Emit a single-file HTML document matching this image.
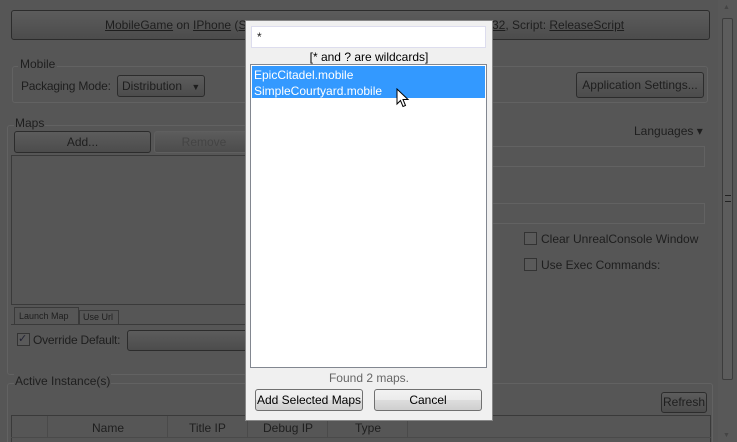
<!DOCTYPE html>
<html><head><style>
*{box-sizing:border-box;margin:0;padding:0}
html,body{width:737px;height:442px;overflow:hidden}
body{background:#565656;font-family:"Liberation Sans",sans-serif;font-size:12px;color:#1e1e1e;position:relative}
.a{position:absolute;white-space:nowrap}
.btn{position:absolute;border:1px solid #2c2c2c;border-radius:3px;background:linear-gradient(#5c5c5c,#4c4c4c);text-align:center;white-space:nowrap}
.grp{position:absolute;border:1px solid #626262;border-radius:3px}
.u{text-decoration:underline}
.cb{position:absolute;width:13px;height:13px;border:1px solid #333;background:#5a5a5a}
.dbtn{position:absolute;border:1px solid #707070;border-radius:3px;background:linear-gradient(#f2f2f2 0%,#ebebeb 50%,#dddddd 51%,#cfcfcf 100%);text-align:center;line-height:20px;color:#000;white-space:nowrap}
</style></head><body>
<div class="btn" style="left:11px;top:10px;width:699px;height:30px;font-size:12px"></div>
<div class="a" style="left:105px;top:18px;font-size:12px"><span class="u">MobileGame</span> on <span class="u">IPhone</span> (<span class="u">S</span></div>
<div class="a" style="left:492px;top:18px;font-size:12px"><span class="u">32</span>, Script: <span class="u">ReleaseScript</span></div>
<div class="grp" style="left:12px;top:66px;width:696px;height:37px"></div>
<div class="a" style="left:18px;top:57px;background:#565656;padding:0 2px;font-size:12px">Mobile</div>
<div class="a" style="left:21px;top:79px;font-size:12px;letter-spacing:-0.2px">Packaging Mode:</div>
<div class="btn" style="left:117px;top:75px;width:88px;height:22px;line-height:20px;text-align:left;padding-left:4px;font-size:12px">Distribution <span style="font-size:9px;margin-left:6px">▼</span></div>
<div class="btn" style="left:576px;top:72px;width:128px;height:26px;line-height:24px;font-size:12px">Application Settings...</div>
<div class="grp" style="left:7px;top:125px;width:240px;height:250px"></div>
<div class="a" style="left:14px;top:116px;background:#565656;padding:0 1px;font-size:12px">Maps</div>
<div class="btn" style="left:14px;top:131px;width:137px;height:22px;line-height:20px;font-size:12px">Add...</div>
<div class="btn" style="left:154px;top:131px;width:100px;height:22px;line-height:20px;font-size:12px;color:#444;border-color:#5f5f5f">Remove</div>
<div class="a" style="left:11px;top:155px;width:240px;height:150px;border:1px solid #3a3a3a"></div>
<div class="a" style="left:14px;top:307px;width:65px;height:18px;border:1px solid #3a3a3a;border-bottom:none;font-size:9px;line-height:16px;padding-left:4px">Launch Map</div>
<div class="a" style="left:79px;top:310px;width:40px;height:15px;border:1px solid #3a3a3a;font-size:9px;line-height:13px;padding-left:3px">Use Url</div>
<div class="a" style="left:11px;top:324px;width:240px;height:1px;background:#3a3a3a"></div>
<div class="cb" style="left:17px;top:333px;font-size:11px;line-height:11px;color:#223">✓</div>
<div class="a" style="left:33px;top:333px;font-size:12px;letter-spacing:-0.2px">Override Default:</div>
<div class="btn" style="left:127px;top:330px;width:130px;height:21px"></div>
<div class="a" style="left:634px;top:124px;font-size:12px">Languages ▾</div>
<div class="a" style="left:490px;top:146px;width:215px;height:21px;border:1px solid #626262"></div>
<div class="a" style="left:490px;top:203px;width:215px;height:21px;border:1px solid #626262"></div>
<div class="cb" style="left:524px;top:232px"></div>
<div class="a" style="left:541px;top:232px;font-size:12px">Clear UnrealConsole Window</div>
<div class="cb" style="left:524px;top:258px"></div>
<div class="a" style="left:541px;top:258px;font-size:12px">Use Exec Commands:</div>
<div class="grp" style="left:7px;top:383px;width:706px;height:70px"></div>
<div class="a" style="left:14px;top:374px;background:#565656;padding:0 1px;font-size:12px">Active Instance(s)</div>
<div class="btn" style="left:661px;top:392px;width:46px;height:21px;line-height:19px;font-size:12px">Refresh</div>
<div class="a" style="left:11px;top:415px;width:700px;height:30px;border:1px solid #3a3a3a"></div>
<div class="a" style="left:47px;top:416px;height:22px;border-left:1px solid #4a4a4a"></div>
<div class="a" style="left:167px;top:416px;height:22px;border-left:1px solid #4a4a4a"></div>
<div class="a" style="left:247px;top:416px;height:22px;border-left:1px solid #4a4a4a"></div>
<div class="a" style="left:327px;top:416px;height:22px;border-left:1px solid #4a4a4a"></div>
<div class="a" style="left:407px;top:416px;height:22px;border-left:1px solid #4a4a4a"></div>
<div class="a" style="left:92px;top:421px;font-size:12px">Name</div>
<div class="a" style="left:189px;top:421px;font-size:12px">Title IP</div>
<div class="a" style="left:263px;top:421px;font-size:12px">Debug IP</div>
<div class="a" style="left:355px;top:421px;font-size:12px">Type</div>
<div class="a" style="left:11px;top:437px;width:700px;height:1px;background:#4a4a4a"></div>
<div class="a" style="left:718px;top:0;width:19px;height:442px;background:#585858"></div>
<div class="a" style="left:723px;top:4px;font-size:7px;color:#444">▲</div>
<div class="a" style="left:723px;top:432px;font-size:7px;color:#444">▼</div>
<div class="a" style="left:722px;top:18px;width:11px;height:362px;border:1px solid #3c3c3c;border-radius:2px;background:#5c5c5c"></div>
<div class="a" style="left:725px;top:195px;width:6px;height:7px;border-top:1px solid #222;border-bottom:1px solid #222"></div>
<div class="a" style="left:245px;top:20px;width:248px;height:401px;background:#f0f0f0;border:1px solid #888"></div>
<div class="a" style="left:251px;top:26px;width:235px;height:22px;background:#fff;border:1px solid #dde;font-size:12px;padding:3px 5px">*</div>
<div class="a" style="left:245px;top:50px;width:248px;text-align:center;font-size:12px;color:#000">[* and ? are wildcards]</div>
<div class="a" style="left:250px;top:64px;width:237px;height:304px;background:#fff;border:1px solid #828790"></div>
<div class="a" style="left:252px;top:66px;width:233px;height:32px;background:#3399ff"></div>
<div class="a" style="left:254px;top:67px;color:#fff;font-size:12px;line-height:16px">EpicCitadel.mobile<br>SimpleCourtyard.mobile</div>
<svg class="a" style="left:396px;top:88px" width="14" height="21" viewBox="0 0 14 21"><path d="M1 1 L1 16 L4.5 12.5 L7 18.5 L9.5 17.5 L7 11.5 L12 11.5 Z" fill="#fff" stroke="#000" stroke-width="1"/></svg>
<div class="a" style="left:245px;top:371px;width:248px;text-align:center;font-size:12px;color:#666">Found 2 maps.</div>
<div class="dbtn" style="left:255px;top:389px;width:108px;height:22px;font-size:12px">Add Selected Maps</div>
<div class="dbtn" style="left:374px;top:389px;width:108px;height:22px;font-size:12px">Cancel</div>
</body></html>
